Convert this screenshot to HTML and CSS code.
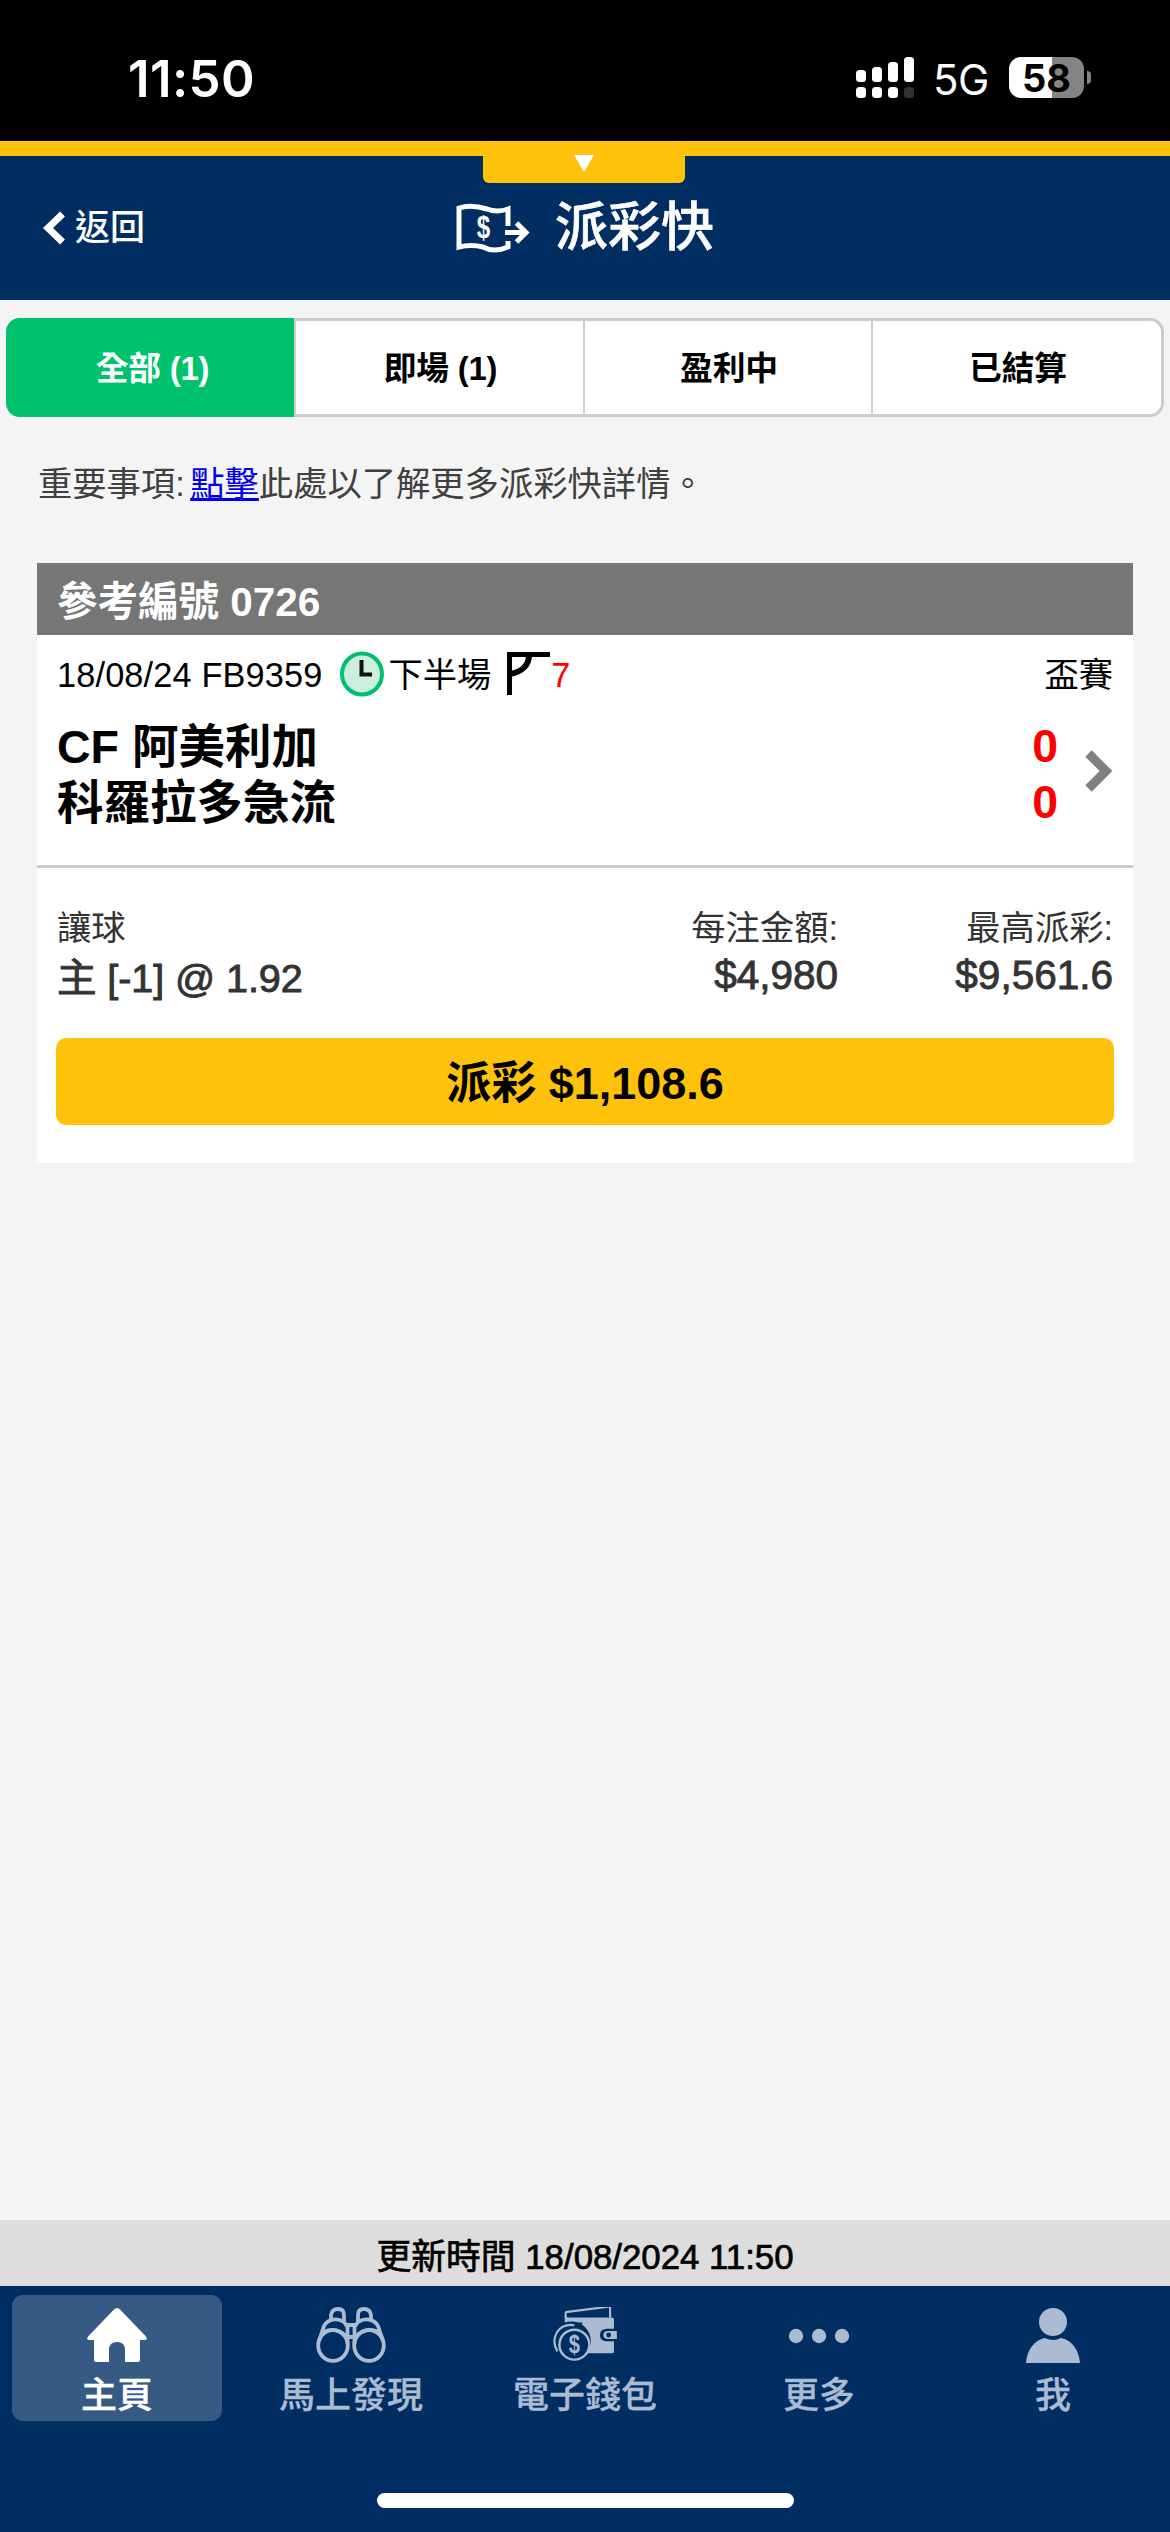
FILE: index.html
```html
<!DOCTYPE html>
<html lang="zh-Hant">
<head>
<meta charset="utf-8">
<title>派彩快</title>
<link rel="stylesheet" href="styles.css">
</head>
<body>
<div class="status">
  <span class="clock">11:50</span>
  <div class="status-right">
    <svg class="signal" width="60" height="42" viewBox="0 0 60 42" fill="#fff"><rect x="0" y="13" width="10" height="12" rx="3.5"/><rect x="16" y="10" width="10" height="15" rx="3.5"/><rect x="32" y="5" width="10" height="20" rx="3.5"/><rect x="48" y="0" width="10" height="25" rx="3.5"/><rect x="0" y="30" width="10" height="11" rx="3.5"/><rect x="16" y="30" width="10" height="11" rx="3.5"/><rect x="32" y="30" width="10" height="11" rx="3.5"/><rect x="48" y="30" width="10" height="11" rx="3.5" fill="#333"/></svg>
    <span class="net">5G</span>
    <div class="battery">58</div>
    <i class="nub"></i>
  </div>
</div>
<header class="header">
  <div class="pull"><svg width="20" height="17" viewBox="0 0 20 17"><path d="M0 0H20L10 17Z" fill="#fff"/></svg></div>
  <a class="back"><svg width="23" height="34" viewBox="0 0 23 34"><path d="M19.5 3L5 17L19.5 31" fill="none" stroke="#fff" stroke-width="7"/></svg>返回</a>
  <h1 class="title"><svg width="74" height="50" viewBox="0 0 74 50" fill="none" stroke="#fff" stroke-width="5"><path d="M52 23V6Q41 10 31 6Q15 1 3 5V44Q15 41 27 44Q38 50 52 44V38"/><path d="M49 29.5H69M60.500 20L70 29.500L60.500 39"/><text transform="translate(27.5 34.5) scale(.78 1)" text-anchor="middle">$</text></svg>派彩快</h1>
</header>
<nav class="tabs">
  <a class="tab on">全部 (1)</a><a class="tab">即場 (1)</a><a class="tab">盈利中</a><a class="tab">已結算</a>
</nav>
<p class="note">重要事項: <a>點擊</a>此處以了解更多派彩快詳情。</p>
<section class="card">
  <h2 class="ref">參考編號 0726</h2>
  <div class="match">
    <div class="meta">
      <span class="code">18/08/24 FB9359</span>
      <svg class="time" width="44" height="46" viewBox="0 0 44 46"><ellipse cx="22" cy="23" rx="20" ry="20.500" fill="#cceedd" stroke="#00c070" stroke-width="4"/><path d="M21.500 9V23.500H32" fill="none" stroke="#111" stroke-width="4"/></svg>
      <span class="half">下半場</span>
      <svg class="flag" width="43" height="43" viewBox="0 0 43 43" fill="none" stroke="#000"><path d="M2.500 43V2.500H43" stroke-width="5"/><path d="M22 3C22 13 15 20 3 22" stroke-width="6"/></svg>
      <span class="red">7</span>
      <span class="cup">盃賽</span>
    </div>
    <div class="teams">
      <div class="names"><div>CF 阿美利加</div><div>科羅拉多急流</div></div>
      <div class="score"><div>0</div><div>0</div></div>
      <svg width="28" height="42" viewBox="0 0 28 42"><path d="M3.500 3.500L21 21L3.500 38.500" fill="none" stroke="#808080" stroke-width="9"/></svg>
    </div>
  </div>
  <div class="bet">
    <div class="sums">
      <div class="pick"><div class="label">讓球</div><div class="value">主 [-1] @ 1.92</div></div>
      <div class="amount"><div class="label">每注金額:</div><div class="value">$4,980</div></div>
      <div class="payout"><div class="label">最高派彩:</div><div class="value">$9,561.6</div></div>
    </div>
    <button class="cashout">派彩 $1,108.6</button>
  </div>
</section>
<div class="updated">更新時間 18/08/2024 11:50</div>
<footer class="bottom">
  <nav class="bar">
    <a class="item on"><svg width="62" height="56" viewBox="0 0 62 56"><path d="M31 1Q32.500 1 34 2.500L59.500 29Q62.500 33 59 33H54V53Q54 55 52 55H39V43Q39 35 31 35Q23 35 23 43V55H10Q8 55 8 53V33H3Q-.5 33 2.500 29L28 2.500Q29.500 1 31 1Z" fill="#fff"/></svg><span>主頁</span></a>
    <a class="item"><svg width="70" height="56" viewBox="0 0 70 56" fill="none" stroke="#aabbd2" stroke-width="3.800"><ellipse cx="17" cy="38.500" rx="14.800" ry="15.300"/><ellipse cx="53" cy="38.500" rx="14.800" ry="15.300"/><path d="M3 34L8 19Q10 15 15 13V8Q16 2 22 2Q28 2 28 8V15L31.500 20V37M67 34L62 19Q60 15 55 13V8Q54 2 48 2Q42 2 42 8V15L38.500 20V37M14 13.500Q21 10.500 28 15M56 13.500Q49 10.500 42 15M8 25Q20 19 31 30M62 25Q50 19 39 30M31 18H39M31 30H39"/></svg><span>馬上發現</span></a>
    <a class="item"><svg width="66" height="58" viewBox="0 3 66 58"><path d="M13 14V9Q13 8 15 8L59 2.500V14" fill="none" stroke="#aabbd2" stroke-width="2.200"/><path d="M12 10V19H30V51H61Q63 51 63 49V16Q63 14 61 14H16Q12 14 12 10Z" fill="#aabbd2"/><path d="M66 25.500H56Q48.500 25.500 48.500 32Q48.500 38.500 56 38.500H66Z" fill="#002d62"/><path d="M66 27.800H57Q52 27.800 52 32Q52 36.200 57 36.200H66Z" fill="#aabbd2"/><circle cx="57.500" cy="32" r="2.500" fill="#002d62"/><circle cx="19" cy="38" r="20" fill="#002d62"/><path d="M4.500 49C-2 39 2 25 14 22Q18 21 22 22" fill="none" stroke="#aabbd2" stroke-width="2.200"/><circle cx="22" cy="42" r="15.500" fill="#002d62" stroke="#aabbd2" stroke-width="2.500"/><text transform="translate(22 50.5) scale(.8 1)" text-anchor="middle">$</text></svg><span>電子錢包</span></a>
    <a class="item"><svg width="62" height="56" viewBox="0 0 62 56" fill="#aabbd2"><circle cx="8" cy="29" r="7.200"/><circle cx="31" cy="29" r="7.200"/><circle cx="54" cy="29" r="7.200"/></svg><span>更多</span></a>
    <a class="item"><svg width="54" height="56" viewBox="0 0 54 56" fill="#aabbd2"><circle cx="27" cy="15" r="14"/><path d="M0 56C1 42 9 33 19 31Q27 35 35 31C45 33 53 42 54 56Z"/></svg><span>我</span></a>
  </nav>
  <div class="home-line"></div>
</footer>
</body>
</html>
```
FILE: styles.css
```css
* { box-sizing: border-box; }
body {
  margin: 0;
  width: 1170px;
  height: 2532px;
  display: flex;
  flex-direction: column;
  background: #f4f4f4;
  color: #000;
  font: 34.3px/1 "Liberation Sans", "Noto Sans CJK TC", sans-serif;
}
svg { display: block; flex: none; }
.status {
  height: 141px;
  flex: none;
  background: #000;
  color: #fff;
  display: flex;
  justify-content: space-between;
  padding: 57px 79px 0 128px;
  font-family: Inter, sans-serif;
}
.clock { font-size: 51px; font-weight: 600; line-height: 43px; letter-spacing: .4px; }
.status-right { display: flex; height: 41px; align-items: center; }
.net { font-size: 42px; margin-left: 17px; width: 76px; line-height: 41px; padding-top: 3px; letter-spacing: -.5px; }
.battery {
  width: 75px;
  height: 41px;
  border-radius: 12px;
  background: linear-gradient(90deg, #fff 43px, #848484 43px);
  color: #000;
  font-size: 38px;
  font-weight: 700;
  line-height: 42px;
  text-align: center;
}
.nub { width: 4px; height: 13px; margin-left: 3px; background: #848484; border-radius: 0 4px 4px 0; }
.header {
  position: relative;
  height: 159px;
  flex: none;
  border-top: 15px solid #ffc20a;
  background: #002d62;
  color: #fff;
  display: grid;
  grid-template-columns: 1fr auto 1fr;
  align-items: start;
}
.pull {
  position: absolute;
  left: 483px;
  top: -1px;
  width: 202px;
  height: 28px;
  background: #ffc20a;
  border-radius: 0 0 6px 6px;
  display: flex;
  justify-content: center;
}
.back { display: flex; align-items: center; gap: 9px; margin: 54px 0 0 43px; font-size: 35px; font-weight: 500; line-height: 36px; }
.title { display: flex; align-items: center; gap: 25px; margin: 42px 0 0; font-size: 53px; font-weight: 500; line-height: 60px; -webkit-text-stroke: .6px #fff; }
.title svg { margin-top: -1px; }
.title text { font: bold 31px "Liberation Sans", sans-serif; fill: #fff; stroke: none; -webkit-text-stroke: 0; }
.tabs {
  flex: none;
  margin: 18px 6px 0;
  height: 99px;
  display: grid;
  grid-template-columns: 288px 289px 288px 1fr;
  background: #fff;
  border: solid #ccc;
  border-width: 3px 3px 3px 0;
  border-radius: 14px;
}
.tab { display: flex; align-items: center; justify-content: center; border-left: 2px solid #d0d0d0; font-size: 32.8px; font-weight: 700; padding: 3px 0 0 2px; letter-spacing: -.2px; }
.tab.on { margin: -3px 0; border: 0; border-radius: 14px 0 0 14px; background: #00c16c; color: #fff; padding-left: 5px; }
.note { margin: 47px 0 0 38px; line-height: 40px; color: #404040; height: 40px; flex: none; word-spacing: -4px; }
.note a { color: #0000ee; text-decoration: underline; }
.card { margin: 59px 37px 0; background: #fff; height: 600px; flex: none; }
.ref { margin: 0; height: 72px; background: #767676; color: #fff; padding: 0 20px; font-size: 40.5px; font-weight: 700; line-height: 78px; }
.match { height: 233px; padding: 17px 20px 0; border-bottom: 3px solid #ccc; }
.meta { display: flex; align-items: center; height: 46px; }
.code { letter-spacing: .15px; }
.time { margin: -2px 0 0 18px; }
.half { margin-left: 4px; }
.flag { margin: -3px 0 0 16px; }
.red { color: #f00; margin-left: 1px; }
.cup { margin-left: auto; }
.teams { display: flex; margin-top: 21px; font-size: 46.5px; font-weight: 700; line-height: 56px; }
.score { margin-left: auto; margin-right: 27px; margin-top: -1px; color: #f00; }
.teams svg { margin: 31px 0 0; }
.bet { padding: 38px 19px 0; color: #333; }
.sums { display: grid; grid-template-columns: 1fr auto 275px; padding: 0 1px; height: 132px; }
.amount, .payout { text-align: right; }
.label { line-height: 44px; }
.value { font-size: 40.5px; line-height: 52px; -webkit-text-stroke: .9px #333; }
.pick .value { font-size: 39.6px; letter-spacing: -.1px; padding-top: 2px; }
.amount .value, .payout .value { margin-top: -1px; }
.cashout { display: block; width: 1058px; height: 87px; border: 0; border-radius: 10px; background: #ffc20a; color: #000; font: 700 45px/85px "Liberation Sans", "Noto Sans CJK TC", sans-serif; padding: 3px 0 0; }
.updated { flex: none; margin-top: auto; height: 66px; background: #ddd; text-align: center; font-size: 34.8px; line-height: 74px; -webkit-text-stroke: .7px #000; }
.bottom { flex: none; height: 246px; background: #002d62; padding-top: 9px; }
.bar { display: grid; grid-template-columns: repeat(5, 234px); }
.item { width: 210px; height: 126px; margin-left: 12px; border-radius: 11px; padding-top: 12px; display: flex; flex-direction: column; align-items: center; color: #aabbd2; font: 500 36px/44px "Noto Sans CJK TC", sans-serif; }
.item span { margin-top: 7px; -webkit-text-stroke: .3px currentColor; }
.item.on { background: #365a83; color: #fff; }
.item text { font: bold 26px "Liberation Sans", sans-serif; fill: #aabbd2; }
.item svg { height: 56px; }
.home-line { width: 417px; height: 15px; border-radius: 8px; background: #fff; margin: 72px auto 0; }
```
